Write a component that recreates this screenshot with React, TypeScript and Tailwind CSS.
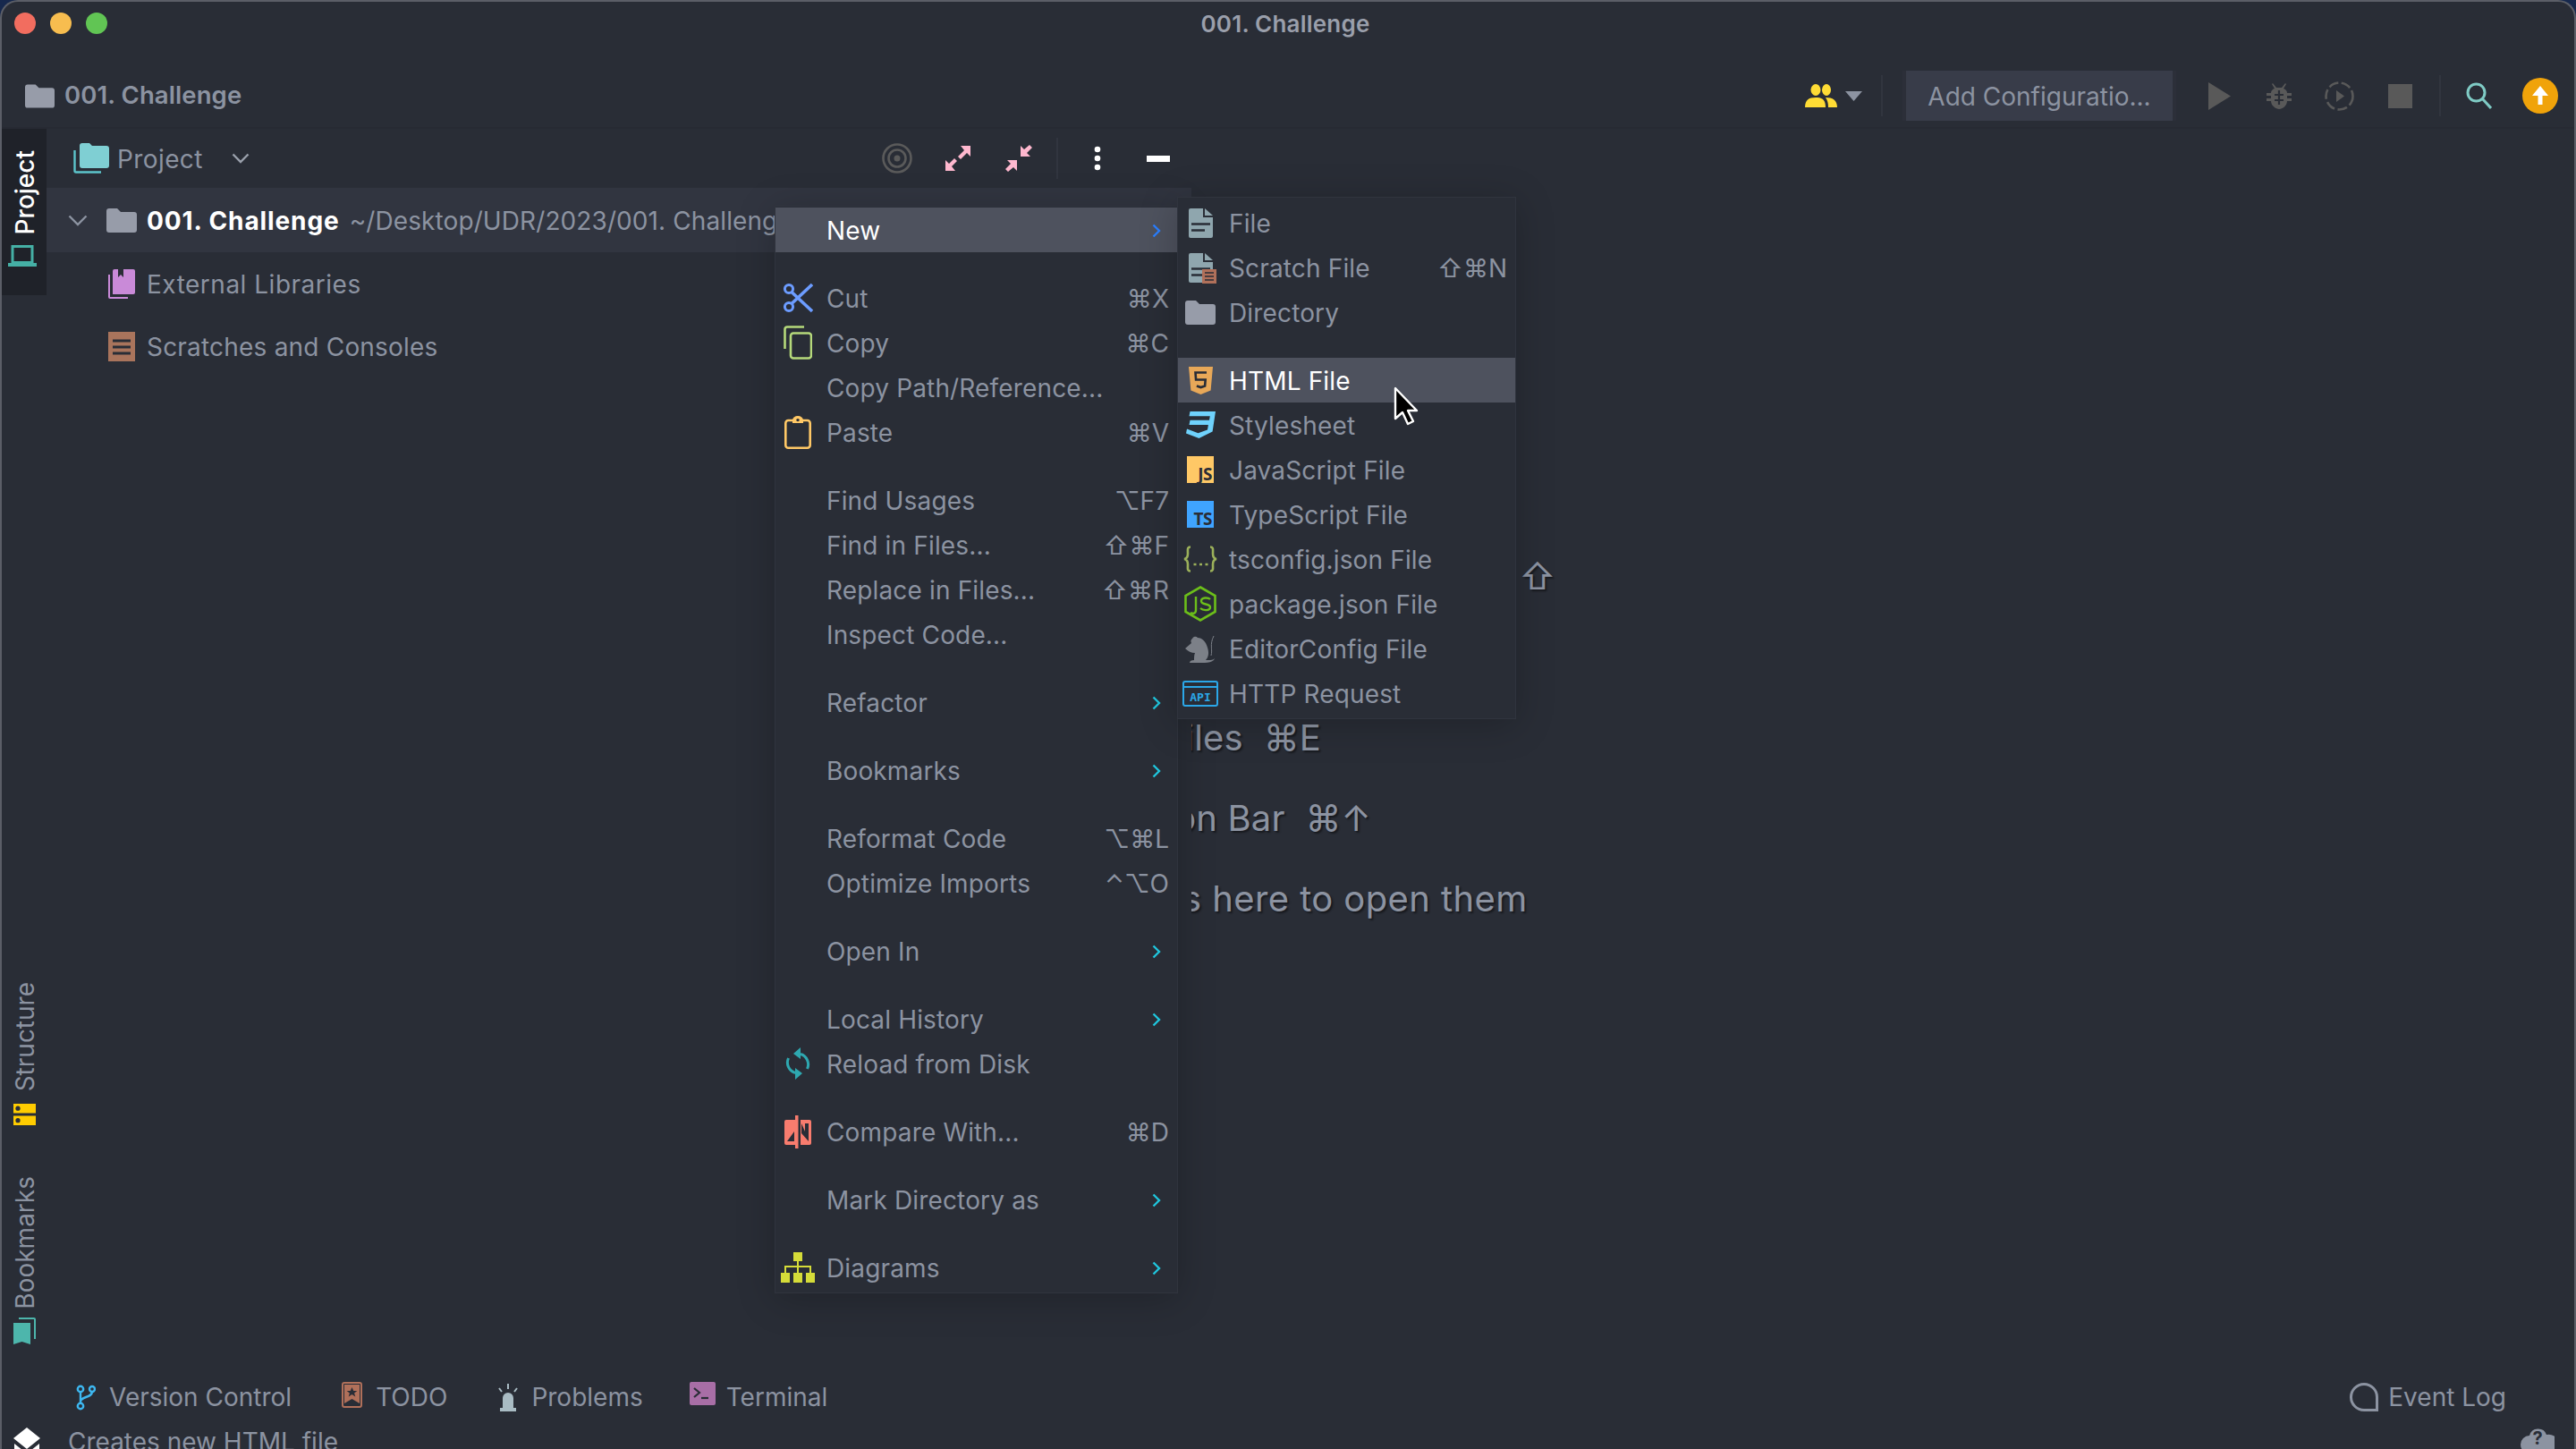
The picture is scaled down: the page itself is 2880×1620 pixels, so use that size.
import React from "react";

const Folder = ({ w = 34, h = 27, c = "#979ca9" }: { w?: number; h?: number; c?: string }) => (
  <svg width={w} height={h} viewBox="0 0 34 27" className="shrink-0">
    <path d="M0 3a3 3 0 0 1 3-3h9l4 4h15a3 3 0 0 1 3 3v17a3 3 0 0 1-3 3H3a3 3 0 0 1-3-3z" fill={c} />
  </svg>
);
const Chevron = ({ active }: { active?: boolean }) => (
  <svg width="10" height="16" viewBox="0 0 10 16" className="shrink-0">
    <path d="M1.5 1.5 8 8l-6.5 6.5" fill="none" stroke={active ? "#2b7fff" : "#20c5dc"} strokeWidth="2.4" />
  </svg>
);
const Scissors = () => (
  <svg width="34" height="34" viewBox="0 0 34 34">
    <circle cx="7" cy="7" r="4.6" fill="none" stroke="#6c9cff" strokeWidth="3" />
    <circle cx="7" cy="27" r="4.6" fill="none" stroke="#6c9cff" strokeWidth="3" />
    <path d="M10 10.5 33 32M10 23.5 33 2" stroke="#6c9cff" strokeWidth="3.6" />
  </svg>
);
const CopyIcon = () => (
  <svg width="32" height="38" viewBox="0 0 32 38">
    <path d="M1.5 26V4a2.5 2.5 0 0 1 2.5-2.5h19" fill="none" stroke="#b5d97b" strokeWidth="2.6" />
    <rect x="8" y="8.5" width="23" height="28" rx="3" fill="none" stroke="#b5d97b" strokeWidth="2.6" />
  </svg>
);
const PasteIcon = () => (
  <svg width="30" height="37" viewBox="0 0 30 37">
    <rect x="1.3" y="5" width="27.4" height="30.7" rx="3" fill="none" stroke="#ffc866" strokeWidth="2.6" />
    <path d="M9 5a6 5 0 0 1 12 0v3H9z" fill="#ffc866" />
    <circle cx="15" cy="4.6" r="1.7" fill="#292d36" />
  </svg>
);
const ReloadIcon = () => (
  <svg width="28" height="36" viewBox="0 0 28 36">
    <path d="M24.5 24A12 12 0 0 0 17 7.5M3.5 12A12 12 0 0 0 11 28.5" fill="none" stroke="#2ea8b0" strokeWidth="3" />
    <path d="M17 0v13L9 7zM11 36V23l8 6z" fill="#2ea8b0" />
  </svg>
);
const CompareIcon = () => (
  <svg width="30" height="37" viewBox="0 0 30 37">
    <path d="M2 5h10.5v28H2a2 2 0 0 1-2-2V7a2 2 0 0 1 2-2z" fill="#f87c6e" />
    <rect x="12" y="0" width="3.5" height="37" fill="#f87c6e" />
    <path d="M18 5h10a2 2 0 0 1 2 2v24a2 2 0 0 1-2 2H18z" fill="#f87c6e" />
    <path d="M11 18v11H3zM19 9v11l8 9V9h-4v9z" fill="#292d36" />
  </svg>
);
const DiagramIcon = () => (
  <svg width="38" height="34" viewBox="0 0 38 34" fill="#d5dc39">
    <rect x="14" y="0" width="10" height="10" />
    <rect x="0" y="23" width="10" height="11" />
    <rect x="14" y="23" width="10" height="11" />
    <rect x="28" y="23" width="10" height="11" />
    <path d="M18 10h2v5h14v8h-2v-6H20v6h-2v-6H6v6H4v-8h14z" />
  </svg>
);
const FileIcon = ({ scratch }: { scratch?: boolean }) => (
  <div className="relative w-[27px] h-[33px]">
    <svg width="27" height="33" viewBox="0 0 27 33" className="block">
      <path d="M2 0h14v10h11v21a2 2 0 0 1-2 2H2a2 2 0 0 1-2-2V2a2 2 0 0 1 2-2z" fill="#8fa6ae" />
      <path d="M18 0l9 8h-9z" fill="#8fa6ae" />
      <path d="M3 17.5h21M3 24.5h15" stroke="#292d36" strokeWidth="2.4" />
    </svg>
    {scratch && (
      <svg width="16" height="16" viewBox="0 0 16 16" className="absolute right-[-4px] bottom-[-1px]">
        <rect width="16" height="16" fill="#b0705a" />
        <path d="M3 4h10M3 8h10M3 12h10" stroke="#292d36" strokeWidth="1.4" />
      </svg>
    )}
  </div>
);
const HtmlIcon = () => (
  <svg width="27" height="31" viewBox="0 0 27 31">
    <path d="M0 0h27l-2.4 26.5L13.5 31 2.4 26.5z" fill="#e8a858" />
    <path d="M20 6.5H7.5l.6 8h10.6l-.6 7-4.6 1.6-4.6-1.6" fill="none" stroke="#292d36" strokeWidth="2.6" />
  </svg>
);
const CssIcon = () => (
  <svg width="33" height="31" viewBox="0 0 33 31">
    <path d="M4.5 0H33l-3.4 22.5L14.5 30 0 24.5l1-5 12.5 4.7 10.5-3.6.9-5.6H3.500l1-5.300h21.500l.8-4.500H3.500z" fill="#6fd2fc" />
  </svg>
);
const BoxText = ({ bg, t }: { bg: string; t: string }) => (
  <div className={`w-[30px] h-[30px] flex items-end justify-end pr-[2px] text-[#2a2d36] text-[19px] font-bold leading-[20px] tracking-[-0.5px] [font-family:'Noto_Sans'] ${bg}`}>
    {t}
  </div>
);
const BracesIcon = () => (
  <svg width="40" height="30" viewBox="0 0 40 30" fill="none" stroke="#9bb05a" strokeWidth="2.6">
    <path d="M9 1.5C5 1.5 6 5 6 9c0 4-1 5.5-4 6 3 .5 4 2 4 6 0 4-1 7.5 3 7.5M31 1.5c4 0 3 3.5 3 7.5 0 4 1 5.5 4 6-3 .5-4 2-4 6 0 4 1 7.5-3 7.5" />
    <path d="M12.5 21h3M19 21h3M25.5 21h3" strokeWidth="2.4" />
  </svg>
);
const NodeIcon = () => (
  <svg width="36" height="40" viewBox="0 0 36 40">
    <path d="M18 1.5 34.5 11v18L18 38.5 1.5 29V11z" fill="none" stroke="#6cbf1a" strokeWidth="2.6" />
    <path d="M13 12v15c0 4-3 4.500-6 3" fill="none" stroke="#6cbf1a" strokeWidth="2.4" />
    <path d="M29 15c-2-2-10-2.500-10 2 0 5 10 2 10 7 0 4-8 4-11 1" fill="none" stroke="#6cbf1a" strokeWidth="2.4" />
  </svg>
);
const MouseIcon = () => (
  <svg width="34" height="31" viewBox="0 0 34 31">
    <path d="M0 15 7 9a4 4 0 0 1 1-5 3.500 3.500 0 0 1 6-1c5 0 9 4 11 11 2 6 1 11-2 14h3c3 0 5 0 7-2l-1 2c-2 2-6 3-10 3H5c0-2 2-3 5-3 0-3 0-6 1-8-4 0-8-2-11-5z" fill="#7c8088" />
    <path d="M29 23c2-7-2-12 3-22" fill="none" stroke="#7c8088" strokeWidth="1" />
  </svg>
);
const ApiIcon = () => (
  <div className="relative w-[40px] h-[29px] rounded-[3px] border-[2px] border-[#2ba7e8] flex items-end justify-center">
    <div className="absolute left-0 right-0 top-[4px] h-[2px] bg-[#2ba7e8]" />
    <span className="text-[#2ba7e8] text-[13px] font-bold leading-[17px] [font-family:'DejaVu_Sans_Mono']">API</span>
  </div>
);

type Item = { t?: string; k?: string; sub?: boolean; icon?: React.ReactNode; active?: boolean; sep?: boolean };

const mainMenu: Item[] = [
  { t: "New", sub: true, active: true },
  { sep: true },
  { t: "Cut", k: "⌘X", icon: <Scissors /> },
  { t: "Copy", k: "⌘C", icon: <CopyIcon /> },
  { t: "Copy Path/Reference..." },
  { t: "Paste", k: "⌘V", icon: <PasteIcon /> },
  { sep: true },
  { t: "Find Usages", k: "⌥F7" },
  { t: "Find in Files...", k: "⇧⌘F" },
  { t: "Replace in Files...", k: "⇧⌘R" },
  { t: "Inspect Code..." },
  { sep: true },
  { t: "Refactor", sub: true },
  { sep: true },
  { t: "Bookmarks", sub: true },
  { sep: true },
  { t: "Reformat Code", k: "⌥⌘L" },
  { t: "Optimize Imports", k: "⌃⌥O" },
  { sep: true },
  { t: "Open In", sub: true },
  { sep: true },
  { t: "Local History", sub: true },
  { t: "Reload from Disk", icon: <ReloadIcon /> },
  { sep: true },
  { t: "Compare With...", k: "⌘D", icon: <CompareIcon /> },
  { sep: true },
  { t: "Mark Directory as", sub: true },
  { sep: true },
  { t: "Diagrams", sub: true, icon: <DiagramIcon /> },
];

const subMenu: Item[] = [
  { t: "File", icon: <FileIcon /> },
  { t: "Scratch File", k: "⇧⌘N", icon: <FileIcon scratch /> },
  { t: "Directory", icon: <Folder /> },
  { sep: true },
  { t: "HTML File", active: true, icon: <HtmlIcon /> },
  { t: "Stylesheet", icon: <CssIcon /> },
  { t: "JavaScript File", icon: <BoxText bg="bg-[#ffc866]" t="JS" /> },
  { t: "TypeScript File", icon: <BoxText bg="bg-[#3fa4ff]" t="TS" /> },
  { t: "tsconfig.json File", icon: <BracesIcon /> },
  { t: "package.json File", icon: <NodeIcon /> },
  { t: "EditorConfig File", icon: <MouseIcon /> },
  { t: "HTTP Request", icon: <ApiIcon /> },
];

const Menu = ({ items, className }: { items: Item[]; className: string }) => (
  <div className={`absolute z-20 bg-[#292d36] border border-[#30343e] shadow-[0_6px_40px_rgba(0,0,0,0.22)] ${className}`}>
    {items.map((it, i) =>
      it.sep ? (
        <div key={i} className="h-[26px]" />
      ) : (
        <div
          key={i}
          className={`flex items-center h-[50px] ${it.active ? "bg-[#4e525e] text-white" : "text-[#8c93a1]"}`}
        >
          <div className="w-[50px] shrink-0 flex items-center justify-center">{it.icon}</div>
          <span className="ml-[7px] pt-[2px] whitespace-nowrap tracking-[0.15px]">{it.t}</span>
          <span className="ml-auto" />
          {it.k && <span className="pr-[9px] pt-[2px] whitespace-nowrap">{it.k}</span>}
          {it.sub && (
            <span className="pr-[18px] pt-[2px]">
              <Chevron active={it.active} />
            </span>
          )}
        </div>
      )
    )}
  </div>
);

const Vertical = ({ children, className = "" }: { children: React.ReactNode; className?: string }) => (
  <span className={`[writing-mode:vertical-rl] rotate-180 whitespace-nowrap leading-[26px] ${className}`}>{children}</span>
);

const Tool = ({ icon, label, className = "" }: { icon: React.ReactNode; label: string; className?: string }) => (
  <div className={`flex items-center ${className}`}>
    {icon}
    <span className="whitespace-nowrap">{label}</span>
  </div>
);

export default function App() {
  return (
    <div className="relative w-[2880px] h-[1620px] overflow-hidden bg-[#16284d] text-[28px] text-[#8c93a1] [font-family:Inter,'DejaVu_Sans',sans-serif]">
      <div className="h-[1620px] flex flex-col overflow-hidden rounded-t-[20px] border-x-2 border-t-2 border-[#5b5e67] bg-[#292d36]">
        {/* title bar */}
        <div className="relative h-[50px] shrink-0 flex items-center justify-center font-semibold text-[26px] tracking-[0.2px] text-[#9a9fab]">
          <div className="absolute left-[14px] top-[12px] flex gap-[16px]">
            <div className="w-[24px] h-[24px] rounded-full bg-[#f26d5f]" />
            <div className="w-[24px] h-[24px] rounded-full bg-[#f7bd4f]" />
            <div className="w-[24px] h-[24px] rounded-full bg-[#61c554]" />
          </div>
          <span className="ml-[-6px] mt-[-1px]">001. Challenge</span>
        </div>

        {/* toolbar */}
        <div className="h-[90px] shrink-0 pt-[20px] flex items-center pl-[26px] pr-[18px]">
          <Folder w={33} h={27} />
          <span className="ml-[11px] font-semibold text-[27.500px] tracking-[0.1px] text-[#8c93a1] mt-[-1px]">001. Challenge</span>
          <svg width="36" height="26" viewBox="0 0 36 26" className="ml-auto">
            <ellipse cx="12" cy="6.500" rx="5.500" ry="6.500" fill="#ffdc35" />
            <ellipse cx="24" cy="6.500" rx="5" ry="6.500" fill="#ffdc35" />
            <path d="M0 26c0-8 4-11 12-11s11 3 11 11zM26 26c0-5-1-8-3-11 8 0 13 3 13 11z" fill="#ffdc35" />
          </svg>
          <svg width="19" height="11" viewBox="0 0 19 11" className="ml-[9px]">
            <path d="M0 0h19L9.500 11z" fill="#8c93a1" />
          </svg>
          <div className="ml-[21px] w-[2px] h-[46px] bg-[#31353f]" />
          <div className="ml-[22px] w-[306px] h-[56px] bg-[#383c49] flex items-center justify-center border-x-[4px] border-[#2c2f39] text-[#8c93a1] whitespace-nowrap pt-[2px]">
            Add Configuratio...
          </div>
          <svg width="25" height="31" viewBox="0 0 25 31" className="ml-[36px]">
            <path d="M0 0l25 15.500L0 31z" fill="#595959" />
          </svg>
          <svg width="28" height="30" viewBox="0 0 28 30" className="ml-[40px]">
            <path d="M7 1l4 5h6l4-5 1 1-3 5c3 1 4 3 4 5h5v3h-5v3h5v3h-5c0 5-5 9-9 9s-9-4-9-9H0v-3h5v-3H0v-3h5c0-2 1-4 4-5L6 2z" fill="#595959" />
            <path d="M9 14h10M9 20h10" stroke="#292d36" strokeWidth="2.2" />
            <path d="M14 9v16" stroke="#292d36" strokeWidth="2.2" />
          </svg>
          <svg width="33" height="33" viewBox="0 0 33 33" className="ml-[37px]">
            <circle cx="16.500" cy="16.500" r="15" fill="none" stroke="#595959" strokeWidth="2.6" strokeDasharray="11 3.500" />
            <path d="M13 10l9 6.500L13 23z" fill="#595959" />
          </svg>
          <div className="ml-[38px] w-[27px] h-[27px] bg-[#595959]" />
          <div className="ml-[30px] w-[2px] h-[46px] bg-[#31353f]" />
          <svg width="29" height="30" viewBox="0 0 29 30" className="ml-[28px]">
            <circle cx="11.500" cy="11.500" r="9.500" fill="none" stroke="#7fcbc5" strokeWidth="3" />
            <path d="M18 18l10 11" stroke="#7fcbc5" strokeWidth="3" />
          </svg>
          <svg width="40" height="40" viewBox="0 0 40 40" className="ml-[34px]">
            <circle cx="20" cy="20" r="20" fill="#f0a30a" />
            <path d="M20 9l9 11h-6.500v10h-5V20H11z" fill="#fff" />
          </svg>
        </div>

        {/* main */}
        <div className="h-[1393px] shrink-0 flex border-t-2 border-[#272a33]">
          <div className="w-[50px] shrink-0 flex flex-col justify-between items-center pb-[32px] text-[28px]">
            <div className="w-full h-[186px] bg-[#1f2229] flex flex-col items-center pt-[24px] gap-[12px] text-white font-medium">
              <Vertical className="ml-[2px]">Project</Vertical>
              <svg width="32" height="24" viewBox="0 0 32 24" className="ml-[-4px]">
                <path d="M5 1.500h22v18H5z" fill="none" stroke="#45b0a5" strokeWidth="3" />
                <path d="M0 20h32v4H0z" fill="#45b0a5" />
              </svg>
            </div>
            <div className="flex flex-col items-center">
              <Vertical className="ml-[2px]">Structure</Vertical>
              <svg width="25" height="24" viewBox="0 0 25 24" className="mt-[14px] mb-[57px]">
                <path d="M0 0h25v10.500H0zM0 13.500h25V24H0z" fill="#ffcc00" />
                <circle cx="5" cy="5.200" r="2.600" fill="#292d36" />
                <circle cx="5" cy="18.700" r="2.600" fill="#292d36" />
              </svg>
              <Vertical className="ml-[2px]">Bookmarks</Vertical>
              <svg width="25" height="30" viewBox="0 0 25 30" className="mt-[9px]">
                <path d="M6 0h17a2 2 0 0 1 2 2v22h-2V2H6z" fill="#4db6ac" />
                <path d="M0 6h19v24l-9.500-3L0 30z" fill="#4db6ac" />
              </svg>
            </div>
          </div>

          {/* project panel */}
          <div className="relative z-10 w-[1280px] shrink-0 bg-[#292d36] flex flex-col">
            <div className="h-[66px] shrink-0 flex items-center pl-[30px]">
              <svg width="40" height="34" viewBox="0 0 40 34">
                <path d="M1.500 8v23a1.500 1.500 0 0 0 1.500 1.500h28" fill="none" stroke="#5cc5cc" strokeWidth="2.400" />
                <path d="M7 3a3 3 0 0 1 3-3h8l3 3h16a3 3 0 0 1 3 3v19a3 3 0 0 1-3 3H10a3 3 0 0 1-3-3z" fill="#7fcfd3" />
              </svg>
              <span className="ml-[9px] pt-[2px] tracking-[0.4px]">Project</span>
              <svg width="20" height="12" viewBox="0 0 20 12" className="ml-[32px]">
                <path d="M1.500 1.500 10 10l8.500-8.500" fill="none" stroke="#9aa0ac" strokeWidth="2.400" />
              </svg>
              <svg width="34" height="34" viewBox="0 0 34 34" className="ml-[707px]">
                <circle cx="17" cy="17" r="15.500" fill="none" stroke="#5a5a5a" strokeWidth="2.600" />
                <circle cx="17" cy="17" r="9.500" fill="none" stroke="#5a5a5a" strokeWidth="2.600" />
                <circle cx="17" cy="17" r="3.500" fill="#5a5a5a" />
              </svg>
              <svg width="30" height="30" viewBox="0 0 30 30" className="ml-[36px]">
                <path d="M29 1v12l-4-4-7 7-3-3 7-7-4-5zM1 29V17l4 4 6-6 3 3-6 6 4 5z" fill="#ffb8cf" />
              </svg>
              <svg width="30" height="30" viewBox="0 0 30 30" className="ml-[38px]">
                <path d="M17 13V1l4 4 6-5 3 3-6 6 4 4zM13 17v12l-4-4-6 5-3-3 6-6-4-4z" fill="#ffb8cf" />
              </svg>
              <div className="ml-[27px] w-[2px] h-[46px] bg-[#31353f]" />
              <svg width="8" height="28" viewBox="0 0 8 28" className="ml-[40px]">
                <circle cx="4" cy="4" r="3.300" fill="#fff" />
                <circle cx="4" cy="14" r="3.300" fill="#fff" />
                <circle cx="4" cy="24" r="3.300" fill="#fff" />
              </svg>
              <div className="ml-[51px] w-[26px] h-[7px] bg-white" />
            </div>
            <div className="h-[72px] shrink-0 flex items-center bg-[#313540] whitespace-nowrap overflow-hidden pl-[24px]">
              <svg width="22" height="13" viewBox="0 0 22 13">
                <path d="M1.500 1.500 11 11l9.500-9.500" fill="none" stroke="#8c93a1" strokeWidth="2.400" />
              </svg>
              <span className="ml-[21px]"><Folder /></span>
              <span className="ml-[11px] pt-[2px] font-bold text-white tracking-[0.9px]">001. Challenge</span>
              <span className="ml-[11px] pt-[2px] tracking-[0.1px]">~/Desktop/UDR/2023/001. Challenge</span>
            </div>
            <div className="h-[70px] shrink-0 flex items-center pl-[69px]">
              <svg width="30" height="33" viewBox="0 0 30 33">
                <path d="M1 6v25a1 1 0 0 0 1 1h20" fill="none" stroke="#c98ad8" strokeWidth="2" />
                <path d="M5 2a2 2 0 0 1 2-2h4v9l3-3 3 3V0h11a2 2 0 0 1 2 2v24a2 2 0 0 1-2 2H5z" fill="#c98ad8" />
              </svg>
              <span className="ml-[13px] pt-[2px] tracking-[0.5px]">External Libraries</span>
            </div>
            <div className="h-[70px] shrink-0 flex items-center pl-[69px]">
              <svg width="30" height="33" viewBox="0 0 30 33">
                <rect width="30" height="33" fill="#a9745c" />
                <path d="M5 10h20M5 17h20M5 24h20" stroke="#292d36" strokeWidth="3.200" />
              </svg>
              <span className="ml-[13px] pt-[2px] tracking-[0.2px]">Scratches and Consoles</span>
            </div>
          </div>

          {/* editor hints */}
          <div className="flex-1 min-w-0 overflow-hidden">
            <div className="ml-[-174px] pt-[456px] text-[40px] text-[#8c93a1] whitespace-nowrap [text-shadow:2px_2px_2px_rgba(0,0,0,0.45)]">
              <div className="h-[90px] flex items-center tracking-[0.15px]">Search Everywhere&nbsp; Double ⇧</div>
              <div className="h-[90px] flex items-center">Go to File&nbsp; ⇧⌘O</div>
              <div className="h-[90px] flex items-center tracking-[0.15px]">Recent Files&nbsp; ⌘E</div>
              <div className="h-[90px] flex items-center tracking-[0.15px]">Navigation Bar&nbsp; ⌘↑</div>
              <div className="h-[90px] flex items-center tracking-[0.4px]">Drop files here to open them</div>
            </div>
          </div>
        </div>

        {/* tool window stripe */}
        <div className="h-[54px] shrink-0 flex items-center pl-[83px] pr-[76px] mb-[3px]">
          <Tool
            label="Version Control"
            icon={
              <svg width="22" height="29" viewBox="0 0 22 29" className="mr-[15px]">
                <circle cx="5" cy="5" r="3.200" fill="none" stroke="#3db7f0" strokeWidth="2.400" />
                <circle cx="18" cy="5" r="3" fill="none" stroke="#3db7f0" strokeWidth="2.400" />
                <circle cx="5" cy="24" r="3.200" fill="none" stroke="#3db7f0" strokeWidth="2.400" />
                <path d="M5 8v13M18 8c0 7-13 5-13 11" fill="none" stroke="#3db7f0" strokeWidth="2.400" />
              </svg>
            }
          />
          <Tool
            className="ml-[56px]"
            label="TODO"
            icon={
              <svg width="23" height="29" viewBox="0 0 23 29" className="mr-[15px] mt-[-6px]">
                <rect x="1" y="1" width="21" height="27" rx="2" fill="#292d36" stroke="#b0705a" strokeWidth="2" />
                <path d="M3 3h17v21l-8.500-5L3 24z" fill="#b0705a" />
                <path d="M11.500 6l1.800 4h4l-3.200 2.500 1.200 4-3.800-2.500-3.800 2.500 1.200-4-3.200-2.500h4z" fill="#292d36" />
              </svg>
            }
          />
          <Tool
            className="ml-[55px]"
            label="Problems"
            icon={
              <svg width="26" height="31" viewBox="0 0 26 31" className="mr-[13px]">
                <path d="M7 28V16a6 6 0 0 1 12 0v12zM4 27h18v4H4z" fill="#a9bcc4" />
                <path d="M13 0v6M3 5l3 4M23 5l-3 4" stroke="#a9bcc4" strokeWidth="2" />
              </svg>
            }
          />
          <Tool
            className="ml-[52px]"
            label="Terminal"
            icon={
              <svg width="29" height="26" viewBox="0 0 29 26" className="mr-[12px] mt-[-8px]">
                <rect width="29" height="26" rx="2" fill="#a86ea6" />
                <path d="M5 7l6 5-6 5" fill="none" stroke="#292d36" strokeWidth="2.200" />
                <path d="M13 18h8" stroke="#292d36" strokeWidth="2.200" />
              </svg>
            }
          />
          <Tool
            className="ml-auto"
            label="Event Log"
            icon={
              <svg width="32" height="32" viewBox="0 0 32 32" className="mr-[11px]">
                <path d="M16 1.500A14.500 14.500 0 0 1 30.500 16v14.500H16A14.500 14.500 0 1 1 16 1.500z" fill="none" stroke="#8c93a1" strokeWidth="3" />
              </svg>
            }
          />
        </div>

        {/* status bar */}
        <div className="h-[40px] shrink-0 relative flex items-center pl-[74px]">
          <svg width="30" height="36" viewBox="0 0 30 36" className="absolute left-[13px] top-[4px]">
            <path d="M15 0l15 12-15 12L0 12z" fill="#fff" />
            <path d="M1 18l14 11 14-11v6L15 35 1 24z" fill="#fff" />
          </svg>
          <span className="whitespace-nowrap">Creates new HTML file</span>
          <div className="absolute right-[22px] top-[3px] w-[38px] h-[30px] flex justify-center">
            <svg width="38" height="30" viewBox="0 0 38 30" className="absolute left-0 top-0">
              <path d="M10 30a10 10 0 0 1 0-20 10 10 0 0 1 19-1 9 9 0 0 1 5 21z" fill="#8c93a1" />
            </svg>
            <span className="relative text-[#292d36] text-[20px] font-bold leading-[26px]">?</span>
          </div>
        </div>
      </div>

      {/* context menus */}
      <Menu items={mainMenu} className="left-[866px] top-[230px] w-[451px] pt-[1px] pb-[3px]" />
      <Menu items={subMenu} className="left-[1316px] top-[220px] w-[379px] pt-[3px] pb-[3px]" />

      {/* cursor */}
      <svg width="28" height="44" viewBox="0 0 28 44" className="absolute z-30 left-[1558px] top-[432px]">
        <path d="M2 2v34l8-7 6 13 6-3-6-12h10z" fill="#000" stroke="#fff" strokeWidth="2.400" strokeLinejoin="round" />
      </svg>
    </div>
  );
}
